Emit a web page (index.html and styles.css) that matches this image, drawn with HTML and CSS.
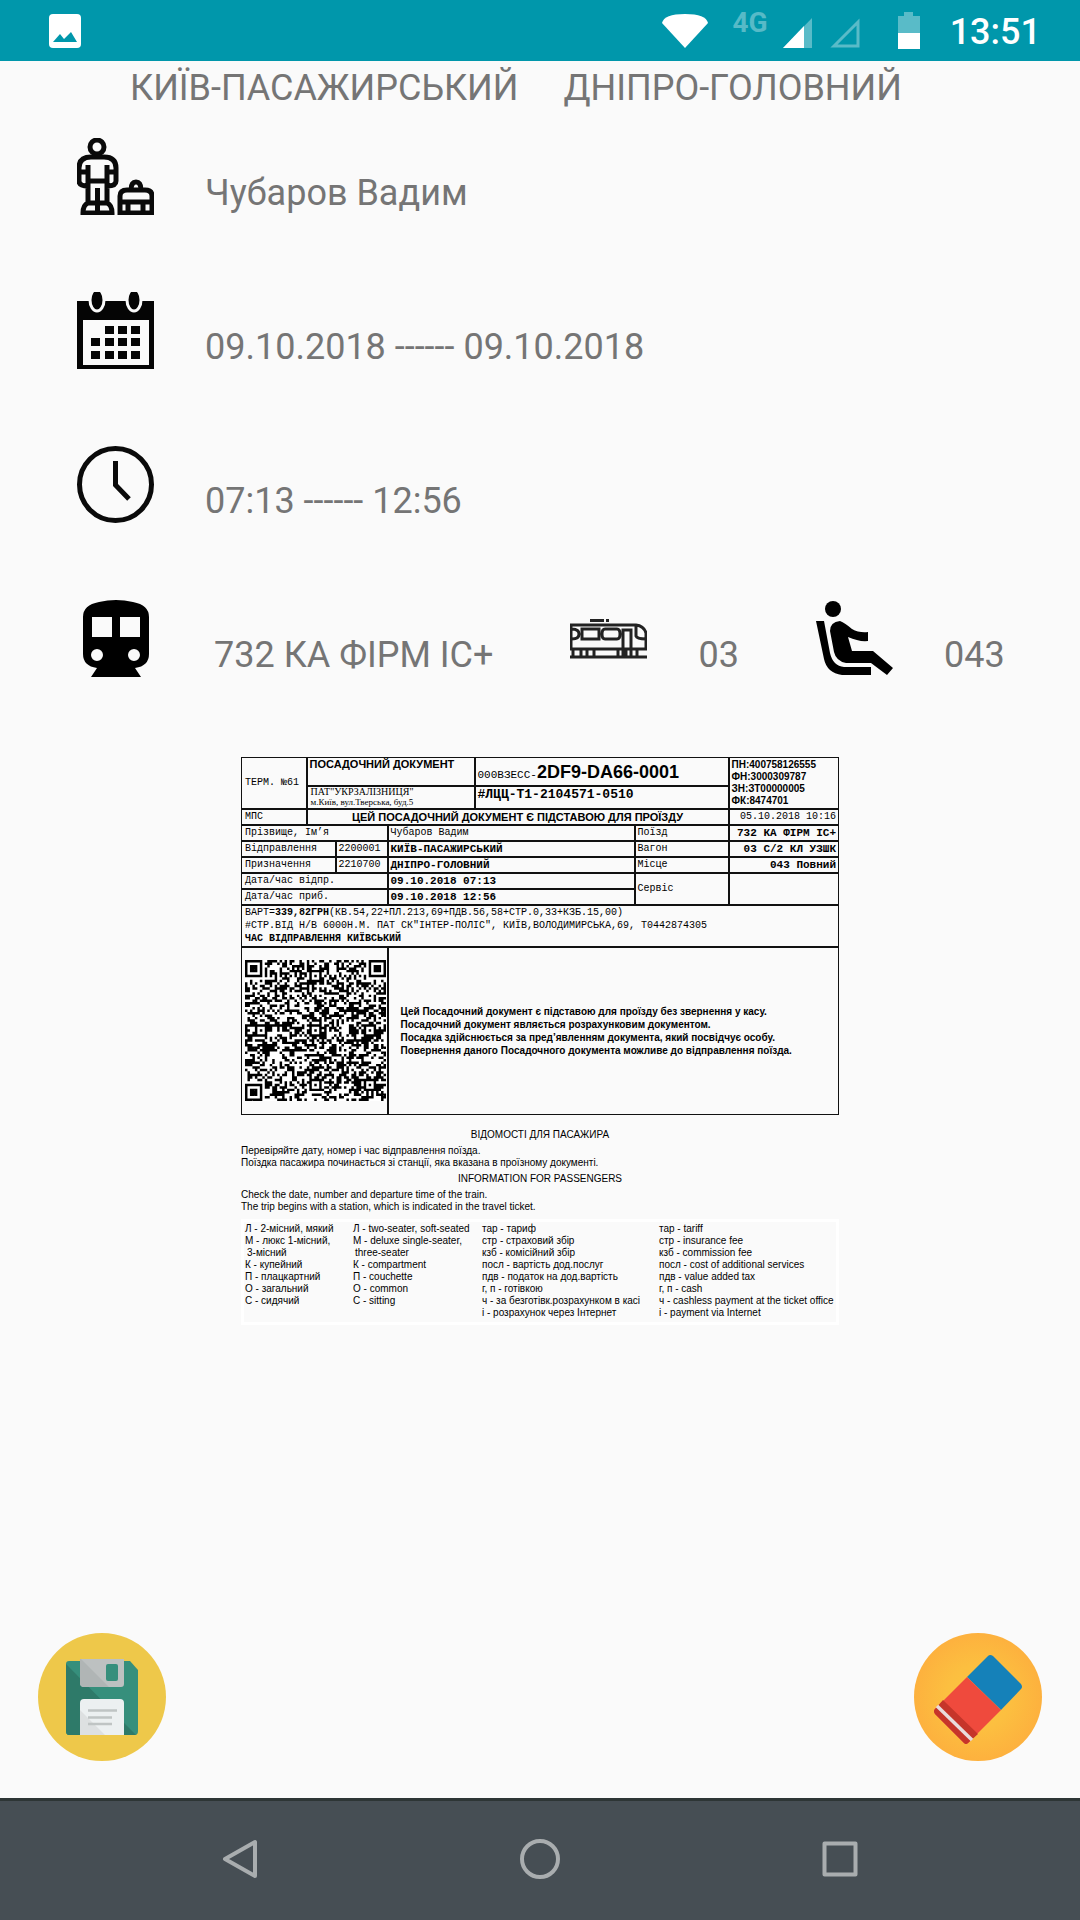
FILE: index.html
```html
<!DOCTYPE html>
<html lang="uk">
<head>
<meta charset="utf-8">
<meta name="viewport" content="width=device-width, initial-scale=1">
<title>Квиток</title>
<link rel="stylesheet" href="styles.css">
</head>
<body>
<header class="status">
  <svg class="status-photo" width="32" height="34" viewBox="0 0 32 34"><rect width="32" height="34" rx="4" fill="#fff"/><path d="M4 28 L11 20 L15 25 L22 18 L28 28 Z" fill="#0097ab"/></svg>
  <div class="status-net">
    <svg width="46" height="34" viewBox="0 0 46 34"><path d="M23 34 L0 9 Q2 0 23 0 Q44 0 46 9 Z" fill="#fff"/></svg>
    <span class="net-type">4G</span>
  </div>
  <div class="status-signal">
    <svg width="30" height="30" viewBox="0 0 30 30"><path d="M1 30 L30 0 V30 Z" fill="#fff" opacity=".35"/><path d="M1 30 L22 8 V30 Z" fill="#fff"/></svg>
    <svg width="30" height="30" viewBox="0 0 30 30"><path d="M4 28 L28 4 V28 Z" fill="none" stroke="#fff" stroke-width="3" opacity=".35"/></svg>
  </div>
  <svg class="status-battery" width="22" height="37" viewBox="0 0 22 37"><path d="M6 0 H15 V4 H22 V37 H0 V4 H6 Z" fill="#fff" opacity=".35"/><path d="M0 21 H22 V37 H0 Z" fill="#fff"/></svg>
  <span class="clock">13:51</span>
</header>

<main class="screen">
  <h1 class="route"><span>КИЇВ-ПАСАЖИРСЬКИЙ</span><span>ДНІПРО-ГОЛОВНИЙ</span></h1>

  <div class="details">
    <div class="row">
      <svg class="icon" viewBox="0 0 77 77" fill="none" stroke="#0a0a0a" stroke-width="5">
        <circle cx="20" cy="9" r="7"/>
        <path d="M11 48 Q2 48 2 43 V30 Q2 19 14 19 H27 Q39 19 39 30 V43 Q39 48 30 48 M2 34 H11 M30 34 H39 M11 27 V65 M30 27 V65 M11 43 H30 M20.500 50 V75 M11 65 H30 M11 65 Q6 67 6 75 H35 Q35 67 30 65"/>
        <path d="M43 75 V58 Q43 52 50 52 H68 Q75 52 75 58 V75 Z M43 64 H75 M54 52 Q54 44 59 44 Q64 44 64 52 M51 64 V75 M66 64 V75"/>
      </svg>
      <span>Чубаров Вадим</span>
    </div>
    <div class="row">
      <svg class="icon" viewBox="0 0 77 77">
        <path d="M0 9 H77 V77 H0 Z" fill="#050505"/><rect x="6" y="28" width="66" height="45" fill="#fafafa"/>
        <g fill="#050505" stroke="#fafafa" stroke-width="3"><ellipse cx="20" cy="8" rx="7" ry="11"/><ellipse cx="57" cy="8" rx="7" ry="11"/></g>
        <path d="M28 34h9v8h-9zM41 34h9v8h-9zM54 34h9v8h-9zM14 46h9v8h-9zM28 46h9v8h-9zM41 46h9v8h-9zM54 46h9v8h-9zM14 59h9v8h-9zM28 59h9v8h-9zM41 59h9v8h-9zM54 59h9v8h-9z" fill="#050505"/>
      </svg>
      <span>09.10.2018 ------ 09.10.2018</span>
    </div>
    <div class="row">
      <svg class="icon" viewBox="0 0 77 77" fill="none" stroke="#0a0a0a" stroke-width="5"><circle cx="38.500" cy="38.500" r="36"/><path d="M38.500 15 V39 L52 53"/></svg>
      <span>07:13 ------ 12:56</span>
    </div>
    <div class="row">
      <svg class="icon" viewBox="0 0 77 77"><path fill="#000" fill-rule="evenodd" d="M6 17 Q6 5 22 2 Q39 -2 56 2 Q72 5 72 17 V54 Q72 66 58 68 L64 77 H14 L20 68 Q6 66 6 54 Z M15 17 V37 H35 V17 Z M43 17 V37 H63 V17 Z M14 55 a6 6 0 0 0 12 0 a6 6 0 0 0 -12 0 Z M51 55 a6 6 0 0 0 12 0 a6 6 0 0 0 -12 0 Z"/></svg>
      <span class="train">732 КА ФІРМ ІС+</span>
      <div class="pair car">
        <svg class="icon" viewBox="0 0 77 77" fill="none" stroke="#222" stroke-width="3">
          <path d="M20 20.500 H34 M36 20.500 H39 M0 25 H66 Q74 26 76 33 V49 H1 V25 M0 57 H77 M12 29 H29 V39 H12 Z M2 29 Q9 29 9 34 Q9 39 2 39 M35 29 H47 Q50 29 50 34 Q50 39 47 39 H35 Q32 39 32 34 Q32 29 35 29 Z M53 57 V30 H61 V57 M66 26 V36 Q67 39 76 39 M3 50 V56 M11 50 V56 M17 50 V56 M24 50 V56 M48 50 V56 M56 50 V56 M67 50 V56"/>
        </svg>
        <span>03</span>
      </div>
      <div class="pair">
        <svg class="icon" viewBox="0 0 77 77"><circle cx="17" cy="9" r="8"/><path d="M0 21 H8 L14 53 Q17 66 28 67 H55 V75 H26 Q11 73 8 59 Z"/><path d="M14 31 Q14 22 24 21 Q29 23 36 29 Q43 33 52 32 V41 Q43 42 32 37 L36 51 H57 L77 68 L71 75 L55 63 H30 Q20 61 18 52 Z"/></svg>
        <span>043</span>
      </div>
    </div>
  </div>

  <section class="ticket">
    <table class="doc">
      <colgroup><col class="c1"><col class="c2"><col class="c3"><col class="c4"><col class="c5"><col class="c6"><col class="c7"></colgroup>
      <tbody>
      <tr class="r-head"><td rowspan="2">ТЕРМ. №61</td><td colspan="3" class="sans top">ПОСАДОЧНИЙ ДОКУМЕНТ</td><td colspan="2" class="number">000ВЗЕСС-<b>2DF9-DA66-0001</b></td><td rowspan="2" class="codes">ПН:400758126555<br>ФН:3000309787<br>ЗН:ЗТ00000005<br>ФК:8474701</td></tr>
      <tr class="r-org"><td colspan="3" class="org">ПАТ"УКРЗАЛІЗНИЦЯ"<br><small>м.Київ, вул.Тверська, буд.5</small></td><td colspan="2" class="serial">#ЛЦЦ-Т1-2104571-0510</td></tr>
      <tr><td>МПС</td><td colspan="5" class="sans mid">ЦЕЙ ПОСАДОЧНИЙ ДОКУМЕНТ Є ПІДСТАВОЮ ДЛЯ ПРОЇЗДУ</td><td class="end">05.10.2018 10:16</td></tr>
      <tr><td colspan="3">Прізвище, Ім’я</td><td colspan="2">Чубаров Вадим</td><td>Поїзд</td><td class="val end">732 КА ФІРМ ІС+</td></tr>
      <tr><td colspan="2">Відправлення</td><td>2200001</td><td colspan="2" class="val">КИЇВ-ПАСАЖИРСЬКИЙ</td><td>Вагон</td><td class="val end">03 С/2 КЛ УЗШК</td></tr>
      <tr><td colspan="2">Призначення</td><td>2210700</td><td colspan="2" class="val">ДНІПРО-ГОЛОВНИЙ</td><td>Місце</td><td class="val end">043 Повний</td></tr>
      <tr><td colspan="3">Дата/час відпр.</td><td colspan="2" class="val">09.10.2018 07:13</td><td rowspan="2">Сервіс</td><td rowspan="2"></td></tr>
      <tr><td colspan="3">Дата/час приб.</td><td colspan="2" class="val">09.10.2018 12:56</td></tr>
      <tr class="r-price"><td colspan="7">ВАРТ=<b>339,82ГРН</b>(КВ.54,22+ПЛ.213,69+ПДВ.56,58+СТР.0,33+КЗБ.15,00)<br>#СТР.ВІД Н/В 6000Н.М. ПАТ СК"ІНТЕР-ПОЛІС", КИЇВ,ВОЛОДИМИРСЬКА,69, Т0442874305<br><b>ЧАС ВІДПРАВЛЕННЯ КИЇВСЬКИЙ</b></td></tr>
      <tr class="r-code"><td colspan="3" class="qr-cell"><svg id="qr" class="qr" viewBox="0 0 57 57" role="img" aria-label="QR"></svg></td><td colspan="4" class="note">Цей Посадочний документ є підставою для проїзду без звернення у касу.<br>Посадочний документ являється розрахунковим документом.<br>Посадка здійснюється за пред’явленням документа, який посвідчує особу.<br>Повернення даного Посадочного документа можливе до відправлення поїзда.</td></tr>
      </tbody>
    </table>
    <div class="info">
      <h2>ВІДОМОСТІ ДЛЯ ПАСАЖИРА</h2>
      <p>Перевіряйте дату, номер і час відправлення поїзда.<br>Поїздка пасажира починається зі станції, яка вказана в проїзному документі.</p>
      <h2>INFORMATION FOR PASSENGERS</h2>
      <p>Check the date, number and departure time of the train.<br>The trip begins with a station, which is indicated in the travel ticket.</p>
    </div>
    <div class="legend">
      <ul><li>Л - 2-місний, мякий</li><li>М - люкс 1-місний,</li><li class="cont">3-місний</li><li>К - купейний</li><li>П - плацкартний</li><li>О - загальний</li><li>С - сидячий</li></ul>
      <ul><li>Л - two-seater, soft-seated</li><li>М - deluxe single-seater,</li><li class="cont">three-seater</li><li>К - compartment</li><li>П - couchette</li><li>О - common</li><li>С - sitting</li></ul>
      <ul><li>тар - тариф</li><li>стр - страховий збір</li><li>кзб - комісійний збір</li><li>посл - вартість дод.послуг</li><li>пдв - податок на дод.вартість</li><li>г, п - готівкою</li><li>ч - за безготівк.розрахунком в касі</li><li>і - розрахунок через Інтернет</li></ul>
      <ul><li>тар - tariff</li><li>стр - insurance fee</li><li>кзб - commission fee</li><li>посл - cost of additional services</li><li>пдв - value added tax</li><li>г, п - cash</li><li>ч - cashless payment at the ticket office</li><li>і - payment via Internet</li></ul>
    </div>
  </section>

  <div class="actions">
    <button type="button" class="fab" aria-label="Зберегти">
      <svg width="128" height="128" viewBox="0 0 128 128">
        <circle cx="64" cy="64" r="64" fill="#eec84a"/>
        <path d="M31 28 H92 L100 37 V98 Q100 102 97 102 H31 Q28 102 28 98 V31 Q28 28 31 28 Z" fill="#368f7c"/>
        <path d="M28 31 L98 102 H31 Q28 102 28 98 Z" fill="#2e7a69"/>
        <path d="M42 26 H86 V51 Q86 54 83 54 H46 Q42 54 42 50 Z" fill="#bdc1c1"/>
        <path d="M42 26 H43 L71 54 H46 Q42 54 42 50 Z" fill="#b0b5b5"/>
        <rect x="68" y="31" width="12" height="17" rx="2" fill="#368f7c"/>
        <path d="M42 70 Q42 66 46 66 H82 Q86 66 86 70 V102 H42 Z" fill="#ecf0f1"/>
        <path d="M42 77 L67 102 H42 Z" fill="#dde0e1"/>
        <path d="M50 77.500 H79 M50 84.500 H74 M50 91 H74" stroke="#bfc4c4" stroke-width="2.500"/>
      </svg>
    </button>
    <button type="button" class="fab" aria-label="Стерти">
      <svg width="128" height="128" viewBox="0 0 128 128">
        <defs><radialGradient id="sun"><stop offset="0" stop-color="#fbc540"/><stop offset=".5" stop-color="#fcbf40"/><stop offset="1" stop-color="#fdb13e"/></radialGradient></defs>
        <circle cx="64" cy="64" r="64" fill="url(#sun)"/>
        <path d="M53 44 L74 23 Q76 21 79 23 L107 51 Q109 54 107 56 L87 77 Z" fill="#1581b9"/>
        <path d="M53 44 L87 77 L54 110 Q52 112 50 110 L21 81 Q19 78 21 76 Z" fill="#ef4a3d"/>
        <path d="M29 67 L64 101 L54 110 Q52 112 50 110 L21 81 Q19 78 21 76 Z" fill="#c6352a"/>
        <path d="M23 73 L58 107" stroke="#e9dcdc" stroke-width="3.500"/>
      </svg>
    </button>
  </div>
</main>

<nav class="navbar">
  <button type="button" aria-label="Назад"><svg width="40" height="40" viewBox="0 0 40 40"><path d="M35 3 V37 L5 20 Z"/></svg></button>
  <button type="button" aria-label="Головна"><svg width="40" height="40" viewBox="0 0 40 40"><circle cx="20" cy="20" r="18"/></svg></button>
  <button type="button" aria-label="Огляд"><svg width="40" height="40" viewBox="0 0 40 40"><rect x="4.500" y="4.500" width="31" height="31"/></svg></button>
</nav>
<script src="qr.js"></script>
</body>
</html>
```

FILE: styles.css
```css
* { box-sizing: border-box; }

body {
  margin: 0;
  min-height: 100vh;
  display: flex;
  flex-direction: column;
  background: #fafafa;
  color: #757575;
  font-family: Roboto, "Noto Sans", sans-serif;
  font-size: 36px;
  line-height: 44px;
}

svg { display: block; flex: none; }
button { border: 0; padding: 0; background: none; cursor: pointer; }

/* Status bar */
.status {
  display: flex;
  align-items: center;
  height: 61px;
  padding: 0 39px 0 49px;
  background: #0097ab;
  color: #fff;
}
.status-photo { margin-right: auto; }
.status-net { display: flex; align-items: center; gap: 25px; margin-right: 14px; }
.net-type {
  margin-bottom: 16px;
  font-size: 28px;
  line-height: 32px;
  font-weight: 700;
  color: rgba(255, 255, 255, .35);
}
.status-signal { display: flex; gap: 18px; margin: 4px 38px 0 0; }
.status-battery { margin-right: 30px; }
.clock { padding-top: 3px; font-weight: 500; }

/* Trip details */
.screen { flex: 1; display: flex; flex-direction: column; padding-top: 5px; }
.route {
  display: flex;
  gap: 45px;
  margin: 0 0 28px;
  padding-left: 130px;
  font-size: inherit;
  font-weight: 400;
}
.details { display: flex; flex-direction: column; gap: 77px; padding: 0 77px; }
.row, .pair { display: flex; align-items: flex-end; gap: 51px; white-space: nowrap; }
.icon { width: 77px; height: 77px; }
.train { padding-left: 9px; }
.car { margin: 0 26px; }

/* Boarding document */
.ticket {
  width: 598px;
  max-width: 100%;
  margin: 80px auto 0;
  color: #000;
  font-family: "Liberation Sans", Arial, sans-serif;
  font-size: 10px;
  line-height: 12px;
}
.doc {
  width: 100%;
  table-layout: fixed;
  border-collapse: collapse;
  font-family: "Liberation Mono", "Courier New", monospace;
  font-size: 10px;
  line-height: 12px;
}
.c1 { width: 65px; }
.c2 { width: 29px; }
.c3 { width: 52px; }
.c4 { width: 87px; }
.c5 { width: 160px; }
.c6 { width: 94px; }
.c7 { width: 110px; }
.doc tr { height: 16px; }
.doc td { padding: 0 2px; border: 2px solid #111; white-space: nowrap; }
.doc tr:first-child td { border-top-width: 1px; }
.doc tr:last-child td { border-bottom-width: 1px; }
.doc td:first-child { border-left-width: 1px; padding-left: 3px; }
.doc td:last-child { border-right-width: 1px; }
.doc .r-head { height: 28px; }
.doc .r-org { height: 23px; }
.doc .r-price { height: 42px; line-height: 13px; }
.doc .r-code { height: 168px; }
.doc .sans, .doc .codes, .doc .note {
  font-family: "Liberation Sans", Arial, sans-serif;
  font-weight: 700;
}
.doc .sans { font-size: 11px; }
.doc .top { vertical-align: top; }
.doc .mid { text-align: center; }
.doc .end { text-align: right; }
.doc .val { font-size: 11px; font-weight: 700; }
.doc .number { font-size: 11px; line-height: 20px; vertical-align: bottom; }
.doc .number b { font-family: "Liberation Sans", Arial, sans-serif; font-size: 18px; }
.doc .org { font-family: "Liberation Serif", "Times New Roman", serif; line-height: 10px; }
.doc .org small { font-size: 9px; }
.doc .serial { font-size: 13px; font-weight: 700; vertical-align: top; line-height: 16px; }
.doc .qr-cell { padding: 0 2px; }
.qr { width: 141px; height: 141px; background: #fff; }
.doc .note { padding-left: 12px; line-height: 13px; }

.info { padding-top: 14px; }
.info h2 { margin: 0; font-size: 10px; font-weight: 400; text-align: center; }
.info p { margin: 4px 0; }

.legend {
  display: grid;
  grid-template-columns: 108px 129px 177px 1fr;
  margin-top: 6px;
  padding: 1px 1px 3px;
  border: 3px solid #fff;
  white-space: nowrap;
}
.legend ul { margin: 0; padding: 0; list-style: none; }
.legend .cont { padding-left: 2px; }

/* Floating actions */
.actions {
  display: flex;
  justify-content: space-between;
  margin-top: auto;
  padding: 0 38px 37px;
}
.fab { border-radius: 50%; }

/* System navigation */
.navbar {
  display: grid;
  grid-template-columns: repeat(3, 1fr);
  justify-items: center;
  align-items: center;
  height: 122px;
  padding: 0 90px 3px;
  border-top: 3px solid #2d3535;
  background: #464e54;
}
.navbar svg { fill: none; stroke: #a9adaf; stroke-width: 4; stroke-linejoin: round; }
```

FILE: qr.js
```js
// Draws a 57 x 57 module matrix: finders, timing lines, alignment marks, data.
(function () {
  var n = 57, seed = 20181009, grid = [], x, y;
  function rnd() {
    seed ^= seed << 13; seed ^= seed >>> 17; seed ^= seed << 5;
    return (seed >>> 0) / 4294967296;
  }
  for (y = 0; y < n; y++) {
    grid.push([]);
    for (x = 0; x < n; x++) grid[y].push(rnd() < 0.5);
  }
  for (x = 8; x < n - 8; x++) grid[6][x] = grid[x][6] = x % 2 === 0;
  function rings(cx, cy, r, light) {
    for (var j = -r; j <= r; j++) {
      for (var i = -r; i <= r; i++) {
        var row = grid[cy + j];
        if (row && cx + i >= 0 && cx + i < n) {
          row[cx + i] = light.indexOf(Math.max(Math.abs(i), Math.abs(j))) < 0;
        }
      }
    }
  }
  [[28, 6], [6, 28], [28, 28], [50, 28], [28, 50], [50, 50]].forEach(function (p) { rings(p[0], p[1], 2, [1]); });
  [[3, 3], [53, 3], [3, 53]].forEach(function (p) { rings(p[0], p[1], 4, [2, 4]); });
  var d = "";
  for (y = 0; y < n; y++) {
    for (x = 0; x < n; x++) if (grid[y][x]) d += "M" + x + " " + y + "h1v1h-1z";
  }
  var path = document.createElementNS("http://www.w3.org/2000/svg", "path");
  path.setAttribute("d", d);
  document.getElementById("qr").appendChild(path);
})();
```
